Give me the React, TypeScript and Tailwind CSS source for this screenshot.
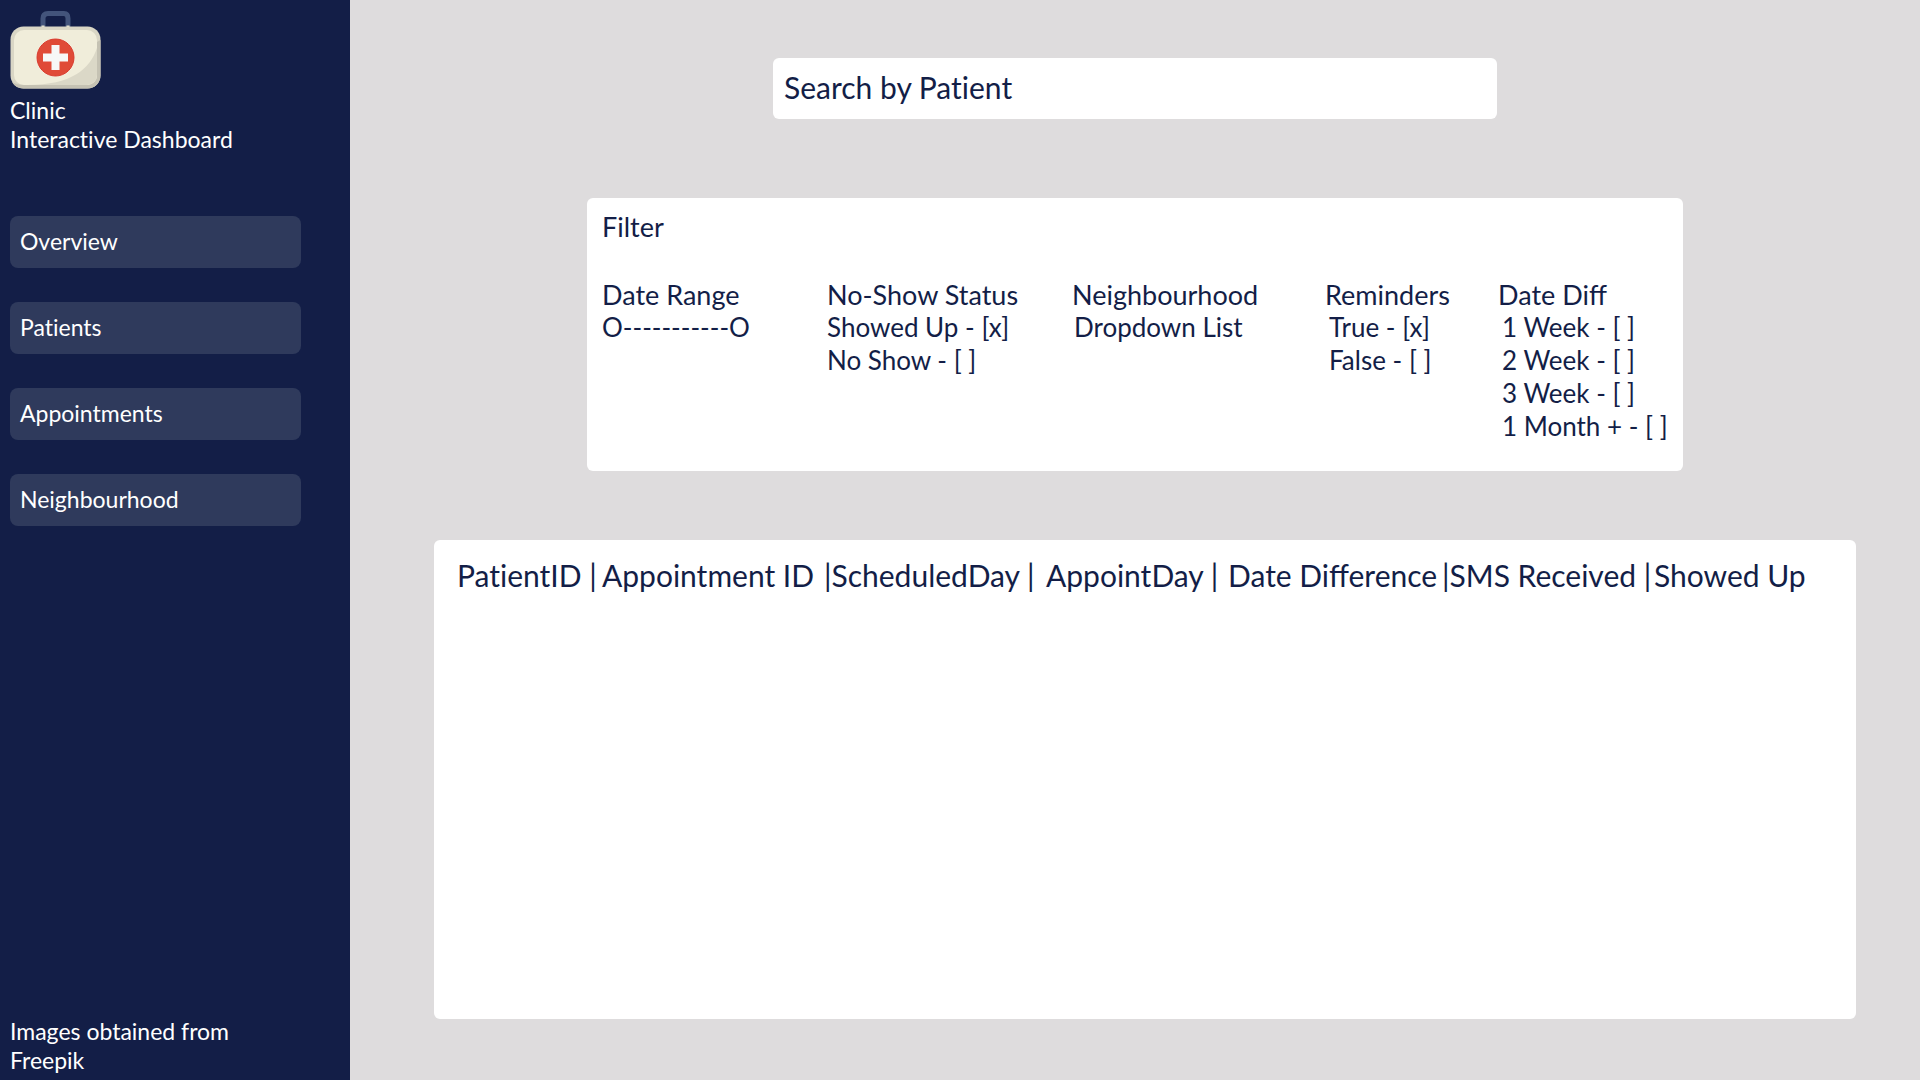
import { useState } from "react";

const NAV_ITEMS = ["Overview", "Patients", "Appointments", "Neighbourhood"];

const COLUMNS = [
  { label: "PatientID |", width: "w-[145px]" },
  { label: "Appointment ID", width: "w-[222px]" },
  { label: "|ScheduledDay |", width: "w-[222px]" },
  { label: "AppointDay |", width: "w-[182px]" },
  { label: "Date Difference", width: "w-[214px] [font-variant-ligatures:normal]" },
  { label: "|SMS Received |", width: "w-[212px]" },
  { label: "Showed Up", width: "w-auto" },
];

function FirstAidKit() {
  return (
    <svg className="block h-[80px] w-[92px]" viewBox="0 0 92 80" aria-hidden="true">
      <defs>
        <clipPath id="case-face">
          <rect x="4" y="20" width="83" height="55" rx="10" />
        </clipPath>
      </defs>
      <path d="M33 17V8.500Q33 3.500 38 3.500H54Q58 3.500 58 8.500V17" fill="none" stroke="#43547b" strokeWidth="5" />
      <path d="M31.500 15.500h3v3h-3zM56.500 15.500h3v3h-3z" fill="#e8e5d2" />
      <rect x="0.500" y="16.500" width="90" height="62" rx="13" fill="#d9d6c5" />
      <path d="M90.500 30V65.500A13 13 0 0 1 77.500 78.500H13.500A13 13 0 0 1 2 72Q7 75 14 75H76Q87 75 87 64V32Z" fill="#c5c2b3" />
      <rect x="4" y="20" width="83" height="55" rx="10" fill="#f0edda" />
      <path d="M89 30C84 56 66 75 18 75H89Z" fill="#dbd8c7" clipPath="url(#case-face)" />
      <circle cx="45.500" cy="47.500" r="19.500" fill="#f5efdf" />
      <circle cx="45.500" cy="47.500" r="18.500" fill="#e04a37" stroke="#d8392b" strokeWidth="1" />
      <path d="M41.500 35h8v8.500h8.500v8h-8.500v8.500h-8v-8.500h-8.500v-8h8.500z" fill="#f7f7f7" />
    </svg>
  );
}

function CheckItem({ label, initial = false }: { label: string; initial?: boolean }) {
  const [checked, setChecked] = useState(initial);
  return (
    <label className="block cursor-pointer whitespace-nowrap text-[26px]">
      <input
        type="checkbox"
        className="peer sr-only"
        checked={checked}
        onChange={(e) => setChecked(e.target.checked)}
      />
      <span className="peer-focus-visible:underline">
        {label} - {checked ? "[x]" : "[ ]"}
      </span>
    </label>
  );
}

function DateRange() {
  const [day, setDay] = useState(0);
  return (
    <div className="relative w-fit text-[26px]">
      <span aria-hidden="true">O-----------O</span>
      <input
        type="range"
        aria-labelledby="date-range"
        min={0}
        max={100}
        value={day}
        onChange={(e) => setDay(Number(e.target.value))}
        className="absolute inset-0 w-full cursor-pointer opacity-0"
      />
    </div>
  );
}

export default function App() {
  const [query, setQuery] = useState("");
  return (
    <div className="flex min-h-screen bg-[#dedcdd] font-['Lato',sans-serif] text-[#131e47] [font-variant-ligatures:none]">
      <aside className="flex w-[350px] shrink-0 flex-col bg-[#131e47] px-2.5 pt-2.5 text-[23px] leading-[29px] text-white">
        <FirstAidKit />
        <h1 className="mt-[6px]">
          Clinic
          <br />
          Interactive Dashboard
        </h1>
        <nav className="mt-[62px] flex flex-col gap-[34px]">
          {NAV_ITEMS.map((item) => (
            <a key={item} href={`#${item.toLowerCase()}`} className="flex h-[52px] w-[291px] items-center rounded-lg bg-[#2f3a5c] px-2.5 pb-0.5">
              {item}
            </a>
          ))}
        </nav>
        <footer className="mt-auto pb-[5px]">
          Images obtained from
          <br />
          Freepik
        </footer>
      </aside>

      <main className="flex min-w-0 flex-1 flex-col pt-[58px] pr-16 pb-[61px] pl-[84px]">
        <input
          type="search"
          aria-label="Search by Patient"
          placeholder="Search by Patient"
          value={query}
          onChange={(e) => setQuery(e.target.value)}
          className="mr-[94px] ml-[74px] h-[61px] w-full max-w-[724px] self-center rounded-md bg-white px-[11px] pb-[3px] text-[30px] placeholder:text-[#131e47] placeholder:opacity-100"
        />

        <section className="mt-[79px] mr-5 h-[273px] w-full max-w-[1096px] self-center rounded-md bg-white px-[15px] pt-3 text-[27px] leading-[33px]">
          <h2>Filter</h2>
          <div className="mt-[35px] grid grid-cols-[225px_245px_253px_173px_1fr]">
            <div>
              <h3 id="date-range">Date Range</h3>
              <DateRange />
            </div>
            <fieldset>
              <legend>No-Show Status</legend>
              <CheckItem label="Showed Up" initial />
              <CheckItem label="No Show" />
            </fieldset>
            <div>
              <label htmlFor="neighbourhood" className="block">
                Neighbourhood
              </label>
              <select id="neighbourhood" className="block appearance-none bg-transparent pl-0.5 text-[26px]">
                <option>Dropdown List</option>
              </select>
            </div>
            <fieldset>
              <legend>Reminders</legend>
              <div className="pl-1">
                <CheckItem label="True" initial />
                <CheckItem label="False" />
              </div>
            </fieldset>
            <fieldset>
              <legend className="[font-variant-ligatures:normal]">Date Diff</legend>
              <div className="pl-1">
                <CheckItem label="1 Week" />
                <CheckItem label="2 Week" />
                <CheckItem label="3 Week" />
                <CheckItem label="1 Month +" />
              </div>
            </fieldset>
          </div>
        </section>

        <section className="mt-[69px] flex-1 rounded-md bg-white px-[23px] pt-[15px]">
          <table className="w-full table-fixed text-left text-[30px] leading-10">
            <thead>
              <tr>
                {COLUMNS.map((column) => (
                  <th key={column.label} scope="col" className={`${column.width} p-0 font-normal whitespace-nowrap`}>
                    {column.label}
                  </th>
                ))}
              </tr>
            </thead>
          </table>
        </section>
      </main>
    </div>
  );
}
